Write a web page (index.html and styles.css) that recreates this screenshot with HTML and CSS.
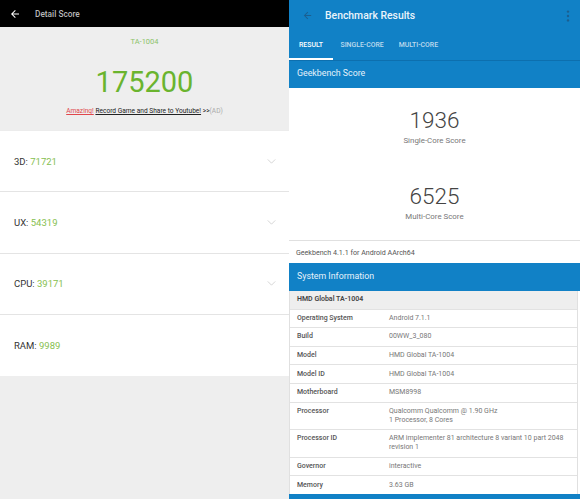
FILE: index.html
```html
<!DOCTYPE html>
<html>
<head>
<meta charset="utf-8">
<title>Benchmarks</title>
<link rel="stylesheet" href="styles.css">
</head>
<body>
<div class="screen">
  <section class="antutu">
    <header class="at-bar">
      <svg class="at-back" viewBox="0 0 24 24" width="12" height="12"><path d="M20 11H7.83l5.59-5.59L12 4l-8 8 8 8 1.41-1.41L7.83 13H20v-2z" fill="#fff"/></svg>
      <span class="at-title">Detail Score</span>
    </header>
    <div class="at-summary">
      <div class="at-model">TA-1004</div>
      <div class="at-total">175200</div>
      <div class="at-ad"><span class="ad-red">Amazing!</span> <span class="ad-link">Record Game and Share to Youtube!</span> &gt;&gt;<span class="ad-tag">(AD)</span></div>
    </div>
    <ul class="at-list">
      <li class="at-row"><span class="k">3D: </span><span class="v">71721</span><svg class="chev" viewBox="0 0 10 6" width="9" height="5"><path d="M0.5 0.5 L5 5 L9.5 0.5" fill="none" stroke="#c8c8c8" stroke-width="0.9"/></svg></li>
      <li class="at-row"><span class="k">UX: </span><span class="v">54319</span><svg class="chev" viewBox="0 0 10 6" width="9" height="5"><path d="M0.5 0.5 L5 5 L9.5 0.5" fill="none" stroke="#c8c8c8" stroke-width="0.9"/></svg></li>
      <li class="at-row"><span class="k">CPU: </span><span class="v">39171</span><svg class="chev" viewBox="0 0 10 6" width="9" height="5"><path d="M0.5 0.5 L5 5 L9.5 0.5" fill="none" stroke="#c8c8c8" stroke-width="0.9"/></svg></li>
      <li class="at-row"><span class="k">RAM: </span><span class="v">9989</span></li>
    </ul>
  </section>

  <section class="gb">
    <div class="gb-appbar">
      <div class="gb-toolbar">
        <svg class="gb-back" viewBox="0 0 24 24" width="11" height="11"><path d="M20 11H7.83l5.59-5.59L12 4l-8 8 8 8 1.41-1.41L7.83 13H20v-2z" fill="#1b5f90"/></svg>
        <span class="gb-title">Benchmark Results</span>
        <svg class="gb-more" viewBox="0 0 4 12" width="4" height="12"><circle cx="2" cy="1.6" r="1.2" fill="#1b5f90"/><circle cx="2" cy="6" r="1.2" fill="#1b5f90"/><circle cx="2" cy="10.4" r="1.2" fill="#1b5f90"/></svg>
      </div>
      <nav class="gb-tabs">
        <span class="tab active">RESULT</span>
        <span class="tab">SINGLE-CORE</span>
        <span class="tab">MULTI-CORE</span>
      </nav>
    </div>
    <div class="gb-head">Geekbench Score</div>
    <div class="gb-scores">
      <div class="big">1936</div>
      <div class="sub">Single-Core Score</div>
      <div class="big second">6525</div>
      <div class="sub">Multi-Core Score</div>
    </div>
    <div class="gb-version">Geekbench 4.1.1 for Android AArch64</div>
    <div class="gb-head tall">System Information</div>
    <div class="gb-table">
      <div class="gb-row title">HMD Global TA-1004</div>
      <div class="gb-row"><span class="lbl">Operating System</span><span class="val">Android 7.1.1</span></div>
      <div class="gb-row"><span class="lbl">Build</span><span class="val">00WW_3_080</span></div>
      <div class="gb-row"><span class="lbl">Model</span><span class="val">HMD Global TA-1004</span></div>
      <div class="gb-row"><span class="lbl">Model ID</span><span class="val">HMD Global TA-1004</span></div>
      <div class="gb-row"><span class="lbl">Motherboard</span><span class="val">MSM8998</span></div>
      <div class="gb-row"><span class="lbl">Processor</span><span class="val">Qualcomm Qualcomm @ 1.90 GHz<br>1 Processor, 8 Cores</span></div>
      <div class="gb-row"><span class="lbl">Processor ID</span><span class="val">ARM implementer 81 architecture 8 variant 10 part 2048 revision 1</span></div>
      <div class="gb-row"><span class="lbl">Governor</span><span class="val">interactive</span></div>
      <div class="gb-row"><span class="lbl">Memory</span><span class="val">3.63 GB</span></div>
    </div>
    <div class="gb-bottom"></div>
  </section>
</div>
</body>
</html>
```

FILE: styles.css
```css
* { box-sizing: border-box; }
html, body { margin: 0; padding: 0; }
body {
  width: 580px;
  height: 499px;
  overflow: hidden;
  font-family: Roboto, "Liberation Sans", sans-serif;
  background: #fff;
}
.screen {
  display: flex;
  width: 580px;
  height: 499px;
}

/* ---------- AnTuTu ---------- */
.antutu {
  width: 289px;
  height: 499px;
  background: #eeeeee;
  display: flex;
  flex-direction: column;
}
.at-bar {
  height: 27px;
  background: #000;
  display: flex;
  align-items: center;
  padding-left: 9px;
}
.at-back { display: block; }
.at-title {
  margin-left: 14px;
  color: #b9b9b9;
  font-size: 8.3px;
  font-weight: 500;
}
.at-summary {
  height: 103px;
  display: flex;
  flex-direction: column;
  align-items: center;
  padding-top: 10px;
}
.at-model {
  font-size: 7.5px;
  line-height: 10px;
  color: #8cc36a;
}
.at-total {
  margin-top: 19px;
  font-size: 29px;
  line-height: 32px;
  color: #6ab42e;
}
.at-ad {
  margin-top: 8px;
  font-size: 6.6px;
  line-height: 10px;
  color: #222;
}
.ad-red { color: #e0474c; text-decoration: underline; }
.ad-link { text-decoration: underline; }
.ad-tag { color: #aaa; }

.at-list {
  list-style: none;
  margin: 0;
  padding: 0;
  background: #fff;
  border-top: 1px solid #ececec;
}
.at-row {
  height: 61.25px;
  display: flex;
  align-items: center;
  padding: 0 13px 0 14px;
  border-bottom: 1px solid #e4e4e4;
  font-size: 9.5px;
}
.at-row:last-child { border-bottom: none; }
.at-row .k { color: #333; white-space: pre; }
.at-row .v { color: #86c050; }
.at-row .chev { margin-left: auto; display: block; }

/* ---------- Geekbench ---------- */
.gb {
  width: 291px;
  height: 499px;
  background: #fff;
  display: flex;
  flex-direction: column;
}
.gb-appbar { background: #1181c6; }
.gb-toolbar {
  height: 31px;
  display: flex;
  align-items: center;
  padding: 0 10px 0 13px;
}
.gb-back { display: block; }
.gb-title {
  margin-left: 12px;
  color: #eaf4fb;
  font-size: 10.4px;
  font-weight: 500;
}
.gb-more { margin-left: auto; display: block; }
.gb-tabs {
  height: 30px;
  display: flex;
  align-items: stretch;
  border-bottom: 1px solid #0d6fae;
}
.tab {
  display: flex;
  align-items: center;
  padding: 1px 7.5px 0;
  font-size: 6.9px;
  font-weight: 500;
  color: rgba(255, 255, 255, 0.72);
  border-bottom: 2px solid transparent;
}
.tab.active {
  width: 44px;
  justify-content: center;
  padding: 1px 0 0;
  color: #fff;
  border-bottom-color: #fff;
}
.gb-head {
  height: 27px;
  background: #1181c6;
  color: #e6f2fb;
  font-size: 8.8px;
  display: flex;
  align-items: center;
  padding: 0 0 4px 8px;
}
.gb-head.tall { height: 28px; padding-bottom: 2px; }
.gb-scores {
  height: 153px;
  display: flex;
  flex-direction: column;
  align-items: center;
  padding-top: 20px;
  border-bottom: 1px solid #e0e0e0;
}
.big {
  font-size: 22.5px;
  line-height: 24px;
  font-weight: 300;
  color: #444;
}
.big.second { margin-top: 38px; }
.sub {
  margin-top: 4px;
  font-size: 7.9px;
  line-height: 10px;
  color: #777;
}
.gb-version {
  height: 22px;
  display: flex;
  align-items: center;
  padding-left: 7px;
  font-size: 7.1px;
  color: #555;
}
.gb-table {
  margin-right: 2px;
  border-left: 1px solid #e0e0e0;
  border-right: 1px solid #e0e0e0;
}
.gb-row {
  display: grid;
  grid-template-columns: 92px 1fr;
  padding: 4.3px 6px 4.3px 7px;
  line-height: 9px;
  font-size: 7px;
  border-bottom: 1px solid #e2e2e2;
}
.gb-row.title {
  display: block;
  background: #eeeeee;
  font-weight: 600;
  color: #444;
}
.gb-row:last-child { border-bottom: none; }
.lbl { color: #555; font-weight: 500; }
.val { color: #777; }
.gb-bottom {
  flex: 1;
  background: #1181c6;
}
```
